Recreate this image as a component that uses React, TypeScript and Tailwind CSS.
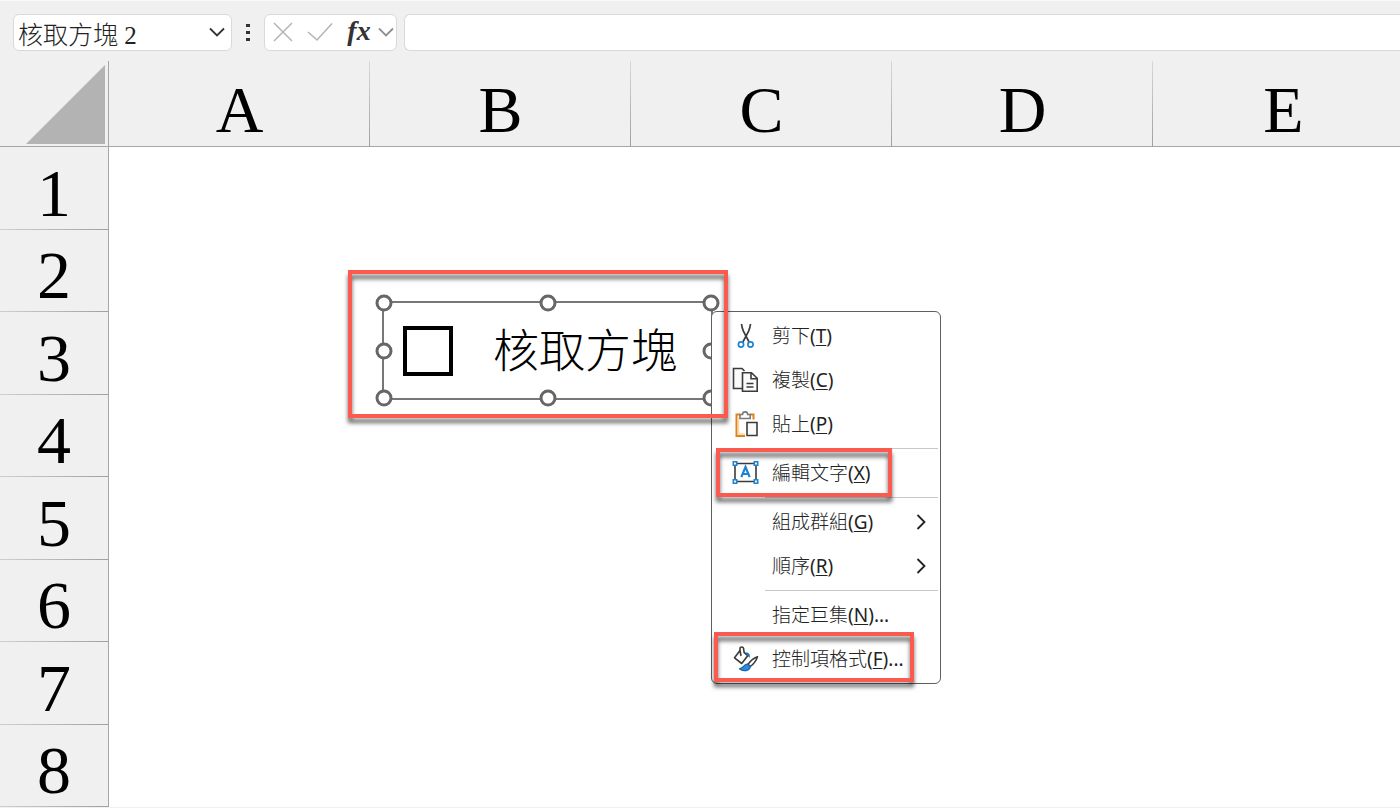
import { Fragment, type ReactNode } from "react";
import clsx from "clsx";

const columns = ["A", "B", "C", "D", "E"];
const rows = [1, 2, 3, 4, 5, 6, 7, 8];

type MenuItem = {
  label: string;
  hotkey: string;
  suffix?: string;
  icon?: ReactNode;
  submenu?: boolean;
};

function CutIcon() {
  return (
    <svg viewBox="0 0 28 28" className="size-7" fill="none" strokeWidth="1.7">
      <path d="M9.500 2c.3 3 1 5 2 7.500l5.600 10.500M18.500 2c-.3 3-1 5-2 7.500l-5.600 10.500" stroke="#3b3b3b" />
      <circle cx="9" cy="22.500" r="2.600" stroke="#1e83d0" />
      <circle cx="18.500" cy="22.500" r="2.600" stroke="#1e83d0" />
    </svg>
  );
}

function CopyIcon() {
  return (
    <svg viewBox="0 0 28 28" className="size-7" stroke="#3b3b3b" strokeWidth="1.600">
      <path d="M11 22.500H1.500V2.500h8.500l2.500 2.500" fill="#fafafa" />
      <path d="M10.500 6.700h9l5.700 5.600v13H10.500z" fill="#fafafa" />
      <path d="M19 7v5.800h6" fill="none" />
      <path d="M14.500 17.500h7M14.500 21h7" fill="none" />
    </svg>
  );
}

function PasteIcon() {
  return (
    <svg viewBox="0 0 28 28" className="size-7" fill="none" strokeWidth="1.600">
      <path d="M8 4.500H4.500v21.500H13M18 4.500h3.500v5" stroke="#e0821c" strokeWidth="2" />
      <path d="M6.500 7v17H13" stroke="#fbd9a0" strokeWidth="1.500" />
      <path d="M8 8.500v-4h2.500a2.600 2.600 0 0 1 5.200 0h2.500v4z" fill="#fff" stroke="#7a7a7a" />
      <path d="M15 12.500h10v13H15z" fill="#fafafa" stroke="#3b3b3b" />
    </svg>
  );
}

function EditTextIcon() {
  return (
    <svg viewBox="0 0 28 28" className="size-7">
      <path d="M3 4.500h21v18H3z" fill="#fff" stroke="#3b3b3b" strokeWidth="1.600" />
      <g fill="#fff" stroke="#1e83d0" strokeWidth="1.600">
        <path d="M1.300 2.800h3.400v3.400H1.300zM22.300 2.800h3.400v3.400h-3.400zM1.300 20.800h3.400v3.400H1.300zM22.300 20.800h3.400v3.400h-3.400z" />
      </g>
      <path d="M9.300 18.200l4.200-10.200 4.200 10.200M10.800 15h5.400" fill="none" stroke="#1e83d0" strokeWidth="2.200" />
    </svg>
  );
}

function FormatIcon() {
  return (
    <svg viewBox="0 0 28 28" className="size-7" fill="none" strokeLinejoin="round">
      <path d="M8 5.500l-5.500 7.300 7.200 5.700 6-7.800-3.500-3M8 5.500l1 5.500M8 5.500V3.200c0-1.600 3.200-1.600 3.500 0L12.200 8" stroke="#3b3b3b" strokeWidth="1.600" />
      <path d="M13 7.500c3-.5 5.500 1 4.800 5.200l-2.800-2.500z" fill="#1e6fbf" />
      <path d="M25.500 11.700c-3.500 1.300-7 4-9.500 7.600l2.300 2.200c3.500-2.700 6-6 7.200-9.800z" fill="#fff" stroke="#3b3b3b" strokeWidth="1.500" />
      <path d="M15.500 19c-3.500-.4-3.200 4-8 4.800 3.500 3.200 10.500 2.200 10.800-2.300z" fill="#2b8be0" stroke="#1761a8" strokeWidth="1.200" />
    </svg>
  );
}

function Chevron({ className }: { className: string }) {
  return (
    <svg viewBox="0 0 16 16" className={clsx("size-4", className)} fill="none" stroke="currentColor" strokeWidth="1.800">
      <path d="M1 4.500l7 7 7-7" />
    </svg>
  );
}

const menuGroups: MenuItem[][] = [
  [
    { label: "剪下", hotkey: "T", icon: <CutIcon /> },
    { label: "複製", hotkey: "C", icon: <CopyIcon /> },
    { label: "貼上", hotkey: "P", icon: <PasteIcon /> },
  ],
  [{ label: "編輯文字", hotkey: "X", icon: <EditTextIcon /> }],
  [
    { label: "組成群組", hotkey: "G", submenu: true },
    { label: "順序", hotkey: "R", submenu: true },
  ],
  [
    { label: "指定巨集", hotkey: "N", suffix: "..." },
    { label: "控制項格式", hotkey: "F", suffix: "...", icon: <FormatIcon /> },
  ],
];

function FormulaBar() {
  return (
    <div className="flex h-[61px] items-center border-t border-[#fafafa] pt-0.5 pl-[13px]">
      <div className="flex h-[37px] w-[219px] items-center rounded-md border border-[#d9d9d9] bg-white pr-1.5 pl-1">
        <input
          aria-label="名稱方塊"
          defaultValue="核取方塊 2"
          className="h-full min-w-0 flex-1 bg-transparent pt-0.5 font-['Liberation_Serif','Noto_Sans_CJK_TC',serif] text-[25px] leading-8 font-light text-[#222] outline-none"
        />
        <button aria-label="展開名稱">
          <Chevron className="text-[#333]" />
        </button>
      </div>
      <div className="mx-3.5 flex w-1 flex-col gap-1">
        <span className="h-[3px] bg-[#333]" />
        <span className="h-[3px] bg-[#333]" />
        <span className="h-[3px] bg-[#333]" />
      </div>
      <div className="flex h-[37px] w-[133px] items-center rounded-md border border-[#d9d9d9] bg-white pl-[7px]">
        <button aria-label="取消">
          <svg viewBox="0 0 22 20" className="h-5 w-[22px]" fill="none" stroke="#b4b4b4" strokeWidth="1.500">
            <path d="M2 1l18 18M20 1L2 19" />
          </svg>
        </button>
        <button aria-label="輸入" className="ml-3">
          <svg viewBox="0 0 28 20" className="h-5 w-7" fill="none" stroke="#b4b4b4" strokeWidth="1.500">
            <path d="M2 10l9 8L26 1.500" />
          </svg>
        </button>
        <button
          aria-label="插入函數"
          className="ml-3 w-[26px] pb-0.5 font-['Liberation_Serif',serif] text-[28px] leading-8 font-bold text-[#333] italic"
        >
          fx
        </button>
        <button aria-label="更多函數" className="ml-1.5">
          <Chevron className="text-[#8f8f8f]" />
        </button>
      </div>
      <input
        aria-label="資料編輯列"
        className="ml-[7px] h-[37px] min-w-0 flex-1 rounded-l-md border border-r-0 border-[#d9d9d9] bg-white px-2 outline-none"
      />
    </div>
  );
}

function Grid() {
  return (
    <table className="w-[1414px] table-fixed border-separate border-spacing-0 bg-white font-['Liberation_Serif',serif] text-black">
      <thead>
        <tr className="h-[86px] bg-[#f0f0f0]">
          <th className="w-[109px] border-r border-b border-[#a6a6a6] p-0">
            <svg viewBox="0 0 79 79" className="mt-0.5 ml-[26px] size-[79px]">
              <path d="M79 0v79H0z" fill="#b3b3b3" />
            </svg>
          </th>
          {columns.map((name) => (
            <th
              key={name}
              className="w-[261px] border-b border-[#a6a6a6] bg-[linear-gradient(to_bottom,#d8d8d8,#a0a0a0)] bg-[length:1px_100%] bg-right bg-no-repeat p-0 pt-3 text-[66px] leading-[72px] font-normal"
            >
              {name}
            </th>
          ))}
        </tr>
      </thead>
      <tbody>
        {rows.map((n) => (
          <tr key={n} className="odd:h-[83px] even:h-[82px]">
            <th className="border-r border-[#a6a6a6] bg-[#f0f0f0] bg-[linear-gradient(to_right,#cfcfcf,#a0a0a0)] bg-[length:100%_1px] bg-bottom bg-no-repeat p-0 pt-2 text-[68px] leading-[74px] font-normal">
              {n}
            </th>
            <td colSpan={5} />
          </tr>
        ))}
      </tbody>
    </table>
  );
}

const handles = [
  "left-0 top-0",
  "left-1/2 top-0",
  "left-full top-0",
  "left-0 top-1/2",
  "left-full top-1/2",
  "left-0 top-full",
  "left-1/2 top-full",
  "left-full top-full",
];

function CheckboxShape() {
  return (
    <div className="absolute top-[301px] left-[382px] flex h-[99px] w-[331px] items-center border-2 border-[#777] pl-[19px]">
      <input
        id="shape-check"
        type="checkbox"
        className="size-[50px] appearance-none border-4 border-black bg-white"
      />
      <label
        htmlFor="shape-check"
        className="ml-10 pb-2 font-['Noto_Sans_CJK_TC',sans-serif] text-[46px] leading-[64px] font-light text-black"
      >
        核取方塊
      </label>
      {handles.map((pos) => (
        <span
          key={pos}
          className={clsx(
            "absolute size-[17px] -translate-1/2 rounded-full border-3 border-[#666] bg-white",
            pos,
          )}
        />
      ))}
    </div>
  );
}

function ContextMenu() {
  return (
    <div
      role="menu"
      className="absolute top-[311px] left-[711px] w-[230px] rounded-md border border-[#5f5f5f] bg-white py-0.5 font-['Noto_Sans','Noto_Sans_CJK_TC',sans-serif] text-[19px] leading-7 font-light text-[#222]"
    >
      {menuGroups.map((group, i) => (
        <Fragment key={i}>
          {i > 0 && <div role="separator" className="my-0.5 mr-0.5 ml-[53px] h-px bg-[#c8c8c8]" />}
          {group.map((item) => (
            <button
              key={item.label}
              role="menuitem"
              className="flex h-11 w-full items-center pr-[11px] pl-5 text-left"
            >
              <span className="w-10 shrink-0">{item.icon}</span>
              <span className="flex-1">
                {item.label}
                <span className="font-normal">
                  (<u className="decoration-1 underline-offset-2">{item.hotkey}</u>){item.suffix}
                </span>
              </span>
              {item.submenu && <Chevron className="-rotate-90 text-[#222]" />}
            </button>
          ))}
        </Fragment>
      ))}
    </div>
  );
}

function Callout({ className }: { className: string }) {
  return (
    <div
      className={clsx(
        "pointer-events-none absolute border-4 border-[#fa5b4e] drop-shadow-[0_5px_2px_rgba(0,0,0,0.6)]",
        className,
      )}
    />
  );
}

export default function App() {
  return (
    <div className="relative min-h-screen overflow-hidden bg-[#f0f0f0]">
      <FormulaBar />
      <Grid />
      <CheckboxShape />
      <ContextMenu />
      <Callout className="top-[270px] left-[348px] h-[148px] w-[380px]" />
      <Callout className="top-[448px] left-[716px] h-[49px] w-[176px]" />
      <Callout className="top-[632px] left-[714px] h-[50px] w-[200px]" />
    </div>
  );
}
